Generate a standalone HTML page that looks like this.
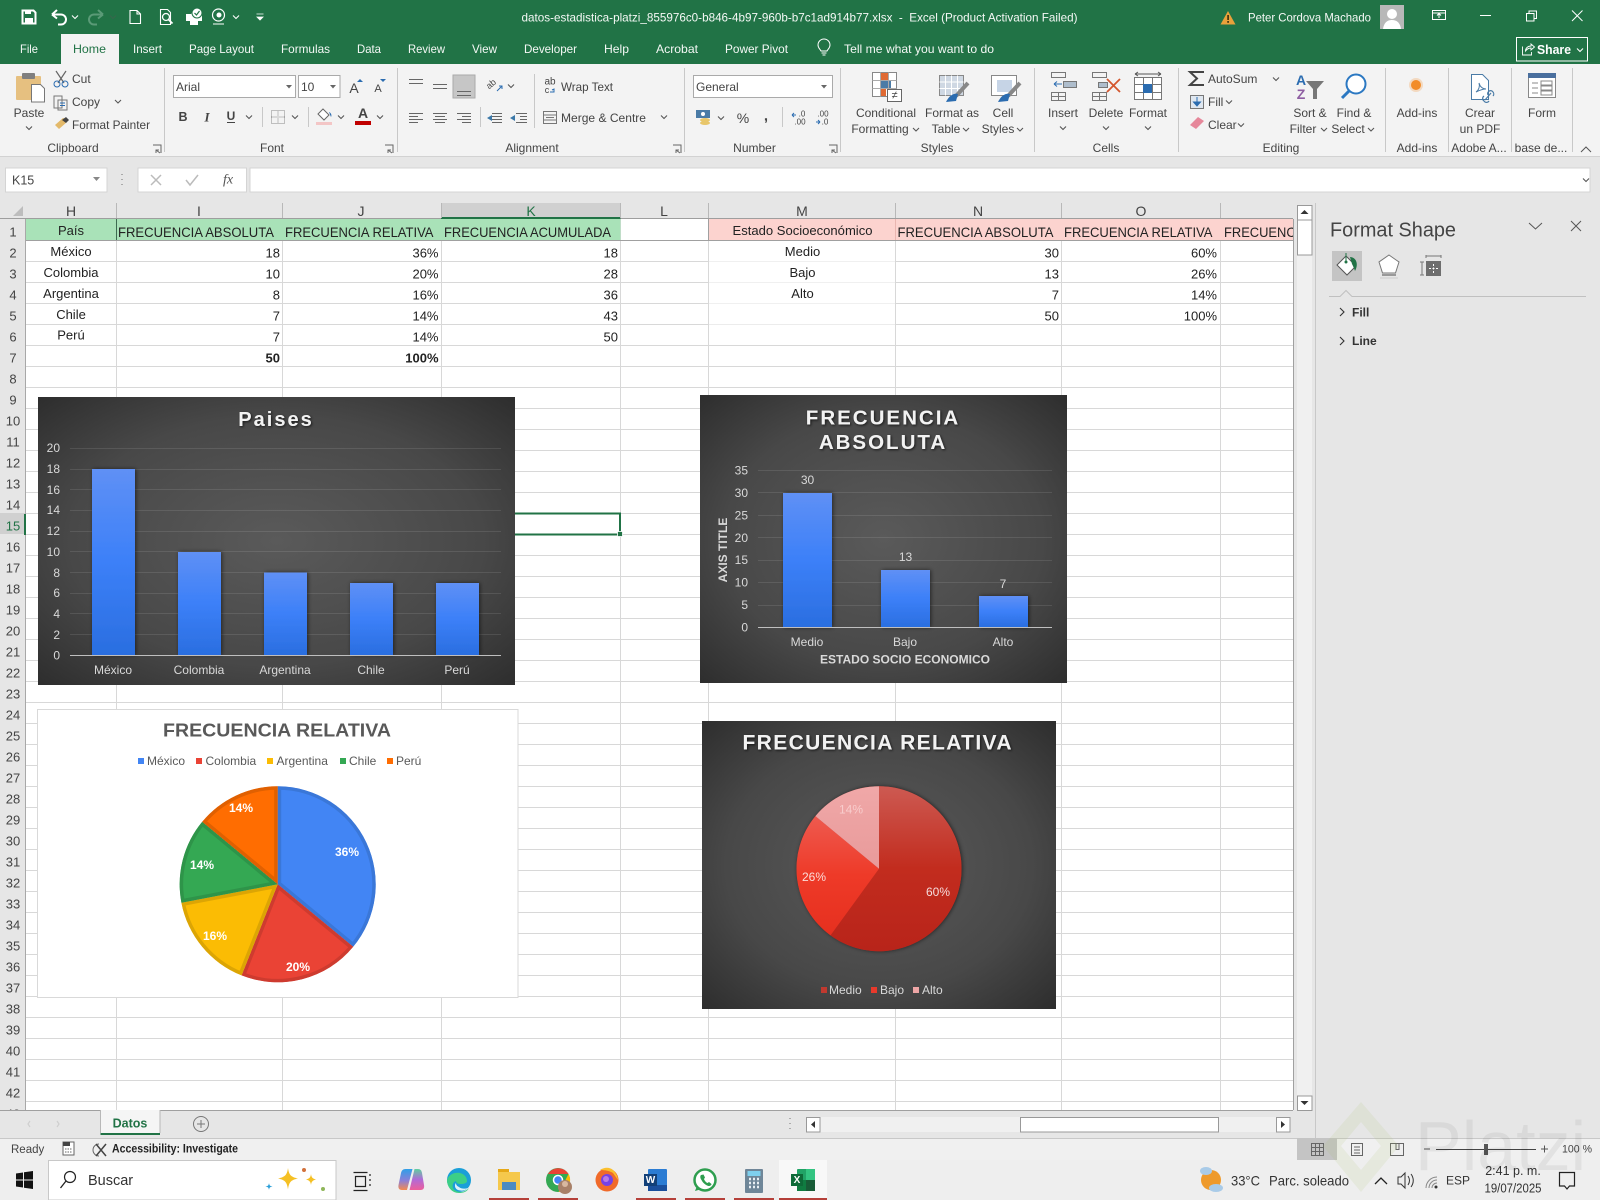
<!DOCTYPE html>
<html lang="en"><head><meta charset="utf-8"><title>Excel</title>
<style>
html,body{margin:0;padding:0;width:1600px;height:1200px;overflow:hidden;background:#fff}
svg{display:block;position:absolute;left:0;top:0}
text{font-family:"Liberation Sans",sans-serif;font-size:12px;fill:#444;dominant-baseline:central;white-space:pre}
.m{text-anchor:middle}.e{text-anchor:end}
.w{fill:#f4f8f5}
.c{font-size:13px;fill:#222}
.h{font-size:14px;fill:#222}
.r{font-size:13px;fill:#444}
.ch{font-size:14px;fill:#444}
.a{font-size:12px;fill:#d9d9d9}
.ti{font-weight:bold;fill:#f2f2f2;letter-spacing:2px;filter:url(#ts)}
.pl{font-weight:bold;fill:#fff;font-size:12px}
.lg{font-size:12px;fill:#595959}
</style></head><body>
<svg width="1600" height="1200" viewBox="0 0 1600 1200" xmlns="http://www.w3.org/2000/svg">
<defs>
<path id="cv" d="M-3-1.5L0 1.5L3-1.5" fill="none" stroke="#555" stroke-width="1.1"/>
<path id="cw" d="M-3-1.5L0 1.5L3-1.5" fill="none" stroke="#fff" stroke-width="1.1"/>
<path id="lc" d="M-4-4H4V4M-1 1L3 4M-1 4V1H2" fill="none" stroke="#666" stroke-width="1"/>
<linearGradient id="bar" x1="0" y1="0" x2="0" y2="1"><stop offset="0" stop-color="#5f90f5"/><stop offset=".5" stop-color="#3c80f8"/><stop offset="1" stop-color="#2a6ee0"/></linearGradient>
<radialGradient id="bg" cx=".5" cy=".5" r=".72"><stop offset="0" stop-color="#5a5a5a"/><stop offset=".6" stop-color="#484848"/><stop offset="1" stop-color="#2c2c2c"/></radialGradient>
<linearGradient id="p1" gradientUnits="userSpaceOnUse" x1="0" y1="786" x2="0" y2="951"><stop offset="0" stop-color="#cd5a52"/><stop offset=".5" stop-color="#c22c1e"/><stop offset="1" stop-color="#b8241a"/></linearGradient>
<linearGradient id="p2" gradientUnits="userSpaceOnUse" x1="0" y1="816" x2="0" y2="935"><stop offset="0" stop-color="#ee5a4f"/><stop offset=".5" stop-color="#ee3a28"/><stop offset="1" stop-color="#e6301f"/></linearGradient>
<linearGradient id="p3" gradientUnits="userSpaceOnUse" x1="0" y1="786" x2="0" y2="869"><stop offset="0" stop-color="#f0a8a8"/><stop offset="1" stop-color="#e89a9a"/></linearGradient>
<linearGradient id="cp1" x1="0" y1="0" x2="0" y2="1"><stop offset="0" stop-color="#2f9fe8"/><stop offset=".55" stop-color="#8a7fd8"/><stop offset="1" stop-color="#f58a4e"/></linearGradient>
<linearGradient id="cp2" x1="0" y1="0" x2="0" y2="1"><stop offset="0" stop-color="#5fcf9f"/><stop offset=".5" stop-color="#b06ad8"/><stop offset="1" stop-color="#ee5f9a"/></linearGradient>
<filter id="ds" x="-30%" y="-10%" width="160%" height="120%"><feDropShadow dx="1" dy="0" stdDeviation="2.2" flood-color="#000" flood-opacity=".55"/></filter>
<filter id="ts" x="-10%" y="-30%" width="120%" height="170%"><feDropShadow dx="1" dy="1" stdDeviation="1.2" flood-color="#000" flood-opacity=".7"/></filter>
<clipPath id="s1"><path d="M277.7 884.3V786.3A98 98 0 0 1 353.2 946.8Z"/></clipPath>
<clipPath id="s2"><path d="M277.7 884.3L353.2 946.8A98 98 0 0 1 241.6 975.4Z"/></clipPath>
<clipPath id="s3"><path d="M277.7 884.3L241.6 975.4A98 98 0 0 1 181.4 902.7Z"/></clipPath>
<clipPath id="s4"><path d="M277.7 884.3L181.4 902.7A98 98 0 0 1 202.2 821.8Z"/></clipPath>
<clipPath id="s5"><path d="M277.7 884.3L202.2 821.8A98 98 0 0 1 277.7 786.3Z"/></clipPath>
<clipPath id="cl1"><rect x="26" y="219" width="1267" height="891"/></clipPath>
</defs>

<!-- Title bar -->
<rect width="1600" height="64" fill="#217346"/>
<rect x="61" y="34" width="58" height="30" fill="#f3f3f3"/>
<!-- QAT -->
<path d="M22.5 10.5h11l2 2v11h-13z" fill="none" stroke="#fff" stroke-width="2"/><rect x="25" y="10" width="6" height="4" fill="#fff"/><rect x="25" y="18" width="8" height="6" fill="#fff"/>
<path d="M52 14.5l5-4.5M52 14.5l5 4M52 14.5h9a5 5 0 0 1 0 10h-3" fill="none" stroke="#fff" stroke-width="2"/>
<use href="#cw" x="75" y="17"/>
<path d="M103 14.5l-5-4.5M103 14.5l-5 4M103 14.500h-9a5 5 0 0 0 0 10h3" fill="none" stroke="#5a9a77" stroke-width="2"/>
<use href="#cv" x="113" y="17" style="opacity:.4"/>
<path d="M130 10.5h7l3.500 3.500v9.500h-10.500z M137 10.500v3.500h3.500" fill="none" stroke="#fff" stroke-width="1.100"/>
<path d="M160.500 9.500h7l3 3v12h-10z" fill="none" stroke="#fff" stroke-width="1.100"/><circle cx="166" cy="17" r="3.500" fill="none" stroke="#fff" stroke-width="1.300"/><path d="M168.500 19.500l4 4" stroke="#fff" stroke-width="1.800"/>
<path d="M186 14h5l2-3h4v3h5v7h-4v4h-8v-4h-4z" fill="#fff"/><circle cx="197" cy="13" r="5" fill="#fff" stroke="#217346"/><path d="M194.500 13l2 2 3-4" fill="none" stroke="#217346" stroke-width="1.200"/>
<circle cx="218.500" cy="15" r="6" fill="none" stroke="#fff" stroke-width="1.200"/><path d="M213 24h11" stroke="#fff" stroke-width="1"/><circle cx="219" cy="15" r="2.500" fill="#fff"/>
<use href="#cw" x="236" y="17"/>
<path d="M256.500 14h7M257 17h6l-3 3z" stroke="#fff" fill="#fff" stroke-width=".8"/>
<text x="521.500" y="17.500" class="w" textLength="556" lengthAdjust="spacingAndGlyphs">datos-estadistica-platzi_855976c0-b846-4b97-960b-b7c1ad914b77.xlsx  -  Excel (Product Activation Failed)</text>
<path d="M1228 11l7.500 13.500h-15z" fill="#e9a13b"/><rect x="1227.200" y="15" width="1.800" height="5" fill="#4a3a10"/><rect x="1227.200" y="21" width="1.800" height="1.800" fill="#4a3a10"/>
<text x="1248" y="17.500" class="w" textLength="123" lengthAdjust="spacingAndGlyphs">Peter Cordova Machado</text>
<rect x="1380" y="5" width="24" height="24" fill="#b8b8b8"/><circle cx="1392" cy="14" r="5" fill="#fff"/><path d="M1383 29c1-7 5-9 9-9s8 2 9 9z" fill="#fff"/>
<path d="M1432.500 10.500h13v9h-13zM1432.500 13h13M1439 18v-4M1437 15.500l2-2 2 2" fill="none" stroke="#fff" stroke-width="1"/>
<path d="M1480 15.500h11" stroke="#fff" stroke-width="1"/>
<path d="M1526.500 13.500h7.500v7.500h-7.500zM1529 13.500v-2.500h7.500v7.500h-2.500" fill="none" stroke="#fff" stroke-width="1"/>
<path d="M1572 10.500l10.500 10.500M1582.500 10.500l-10.500 10.500" stroke="#fff" stroke-width="1"/>
<!-- Tabs -->
<text x="20" y="49" class="w" textLength="18" lengthAdjust="spacingAndGlyphs">File</text>
<text x="73" y="49" style="fill:#217346" textLength="33" lengthAdjust="spacingAndGlyphs">Home</text>
<text x="133" y="49" class="w" textLength="29" lengthAdjust="spacingAndGlyphs">Insert</text>
<text x="189" y="49" class="w" textLength="65" lengthAdjust="spacingAndGlyphs">Page Layout</text>
<text x="281" y="49" class="w" textLength="49" lengthAdjust="spacingAndGlyphs">Formulas</text>
<text x="357" y="49" class="w" textLength="24" lengthAdjust="spacingAndGlyphs">Data</text>
<text x="408" y="49" class="w" textLength="37" lengthAdjust="spacingAndGlyphs">Review</text>
<text x="472" y="49" class="w" textLength="25" lengthAdjust="spacingAndGlyphs">View</text>
<text x="524" y="49" class="w" textLength="53" lengthAdjust="spacingAndGlyphs">Developer</text>
<text x="604" y="49" class="w" textLength="25" lengthAdjust="spacingAndGlyphs">Help</text>
<text x="656" y="49" class="w" textLength="42" lengthAdjust="spacingAndGlyphs">Acrobat</text>
<text x="725" y="49" class="w" textLength="63" lengthAdjust="spacingAndGlyphs">Power Pivot</text>
<path d="M821 52c-1-2-3-3-3-6a6 6 0 0 1 12 0c0 3-2 4-3 6zM821.500 54h5M822.500 56h3" fill="none" stroke="#fff" stroke-width="1" transform="translate(0,-1)"/>
<text x="844" y="49" class="w" textLength="150" lengthAdjust="spacingAndGlyphs">Tell me what you want to do</text>
<rect x="1516.500" y="37.500" width="71" height="23.500" fill="none" stroke="#fff"/>
<path d="M1522.500 46.500v8.500h9v-3M1525.500 51c0-3 2.500-5 5.500-5v-2l3.500 3-3.500 3v-2c-2 0-4 1-5.500 3z" fill="none" stroke="#fff" stroke-width=".9"/>
<text x="1537" y="49.500" style="font-size:13px;font-weight:bold;fill:#fff" textLength="34" lengthAdjust="spacingAndGlyphs">Share</text>
<use href="#cw" x="1580" y="50"/>

<!-- Ribbon -->
<rect y="64" width="1600" height="93" fill="#f3f3f3"/>
<rect y="156" width="1600" height="1" fill="#d2d2d2"/>
<g fill="#c8c8c8">
<rect x="164" y="68" width="1" height="84"/><rect x="397" y="68" width="1" height="84"/><rect x="684" y="68" width="1" height="84"/><rect x="840" y="68" width="1" height="84"/><rect x="1034" y="68" width="1" height="84"/><rect x="1178" y="68" width="1" height="84"/><rect x="1385" y="68" width="1" height="84"/><rect x="1448" y="68" width="1" height="84"/><rect x="1511" y="68" width="1" height="84"/><rect x="1572" y="68" width="1" height="84"/>
</g>
<!-- clipboard -->
<rect x="16" y="76" width="25" height="24" rx="1" fill="#e6c080"/><rect x="22" y="73" width="13" height="6" rx="1" fill="#7f7f7f"/>
<path d="M31.500 84.500h9l4 4v13.500h-13z" fill="#fff" stroke="#777"/>
<text x="29" y="113" class="m">Paste</text><use href="#cv" x="29" y="128"/>
<path d="M56 71l8 12M66 71l-8 12" stroke="#666" stroke-width="1.200"/><circle cx="57" cy="84" r="3" fill="none" stroke="#2b6cb0"/><circle cx="65" cy="84" r="3" fill="none" stroke="#2b6cb0"/>
<text x="72" y="79">Cut</text>
<path d="M54 96h8v12h-8zM58 100h9v10h-9z" fill="#f3f3f3" stroke="#777"/><path d="M60 103h5M60 105.500h5" stroke="#2b6cb0"/>
<text x="72" y="102">Copy</text><use href="#cv" x="118" y="101.500"/>
<path d="M67 119l-4-1-8 7 4 4 8-7z" fill="#e3b96a"/><path d="M62 120l4-3 3 3-3 3z" fill="#444"/>
<text x="72" y="125" textLength="78" lengthAdjust="spacingAndGlyphs">Format Painter</text>
<text x="73" y="148" class="m">Clipboard</text><use href="#lc" x="157" y="149"/>
<!-- font -->
<rect x="173.500" y="75.500" width="122" height="22" fill="#fff" stroke="#aaa"/><text x="176" y="87">Arial</text>
<path d="M286 85h6l-3 3.500z" fill="#666"/>
<rect x="298.500" y="75.500" width="41.500" height="22" fill="#fff" stroke="#aaa"/><text x="301" y="87">10</text>
<path d="M330 85h6l-3 3.500z" fill="#666"/>
<text x="354" y="88" class="m" style="font-size:14px">A</text><path d="M357 82h6l-3-3z" fill="#2b6cb0"/>
<text x="378" y="89" class="m" style="font-size:11px">A</text><path d="M380 79h6l-3 3z" fill="#2b6cb0"/>
<text x="183" y="117" class="m" style="font-weight:bold;font-size:12.500px">B</text>
<text x="207" y="117" class="m" style="font-style:italic;font-family:'Liberation Serif',serif;font-weight:bold;font-size:13px">I</text>
<text x="231" y="116" class="m" style="font-weight:bold">U</text><rect x="227" y="122" width="8" height="1" fill="#444"/>
<use href="#cv" x="249" y="117"/><rect x="262" y="107" width="1" height="20" fill="#c8c8c8"/>
<path d="M271.500 110.500h13v13h-13zM278 110.500v13M271.500 117h13" fill="none" stroke="#888" stroke-dasharray="1 1"/>
<use href="#cv" x="295" y="117"/><rect x="308" y="107" width="1" height="20" fill="#c8c8c8"/>
<path d="M323 109l6 6-5 5-6-6z" fill="#fff" stroke="#666"/><path d="M329 112c2 1 3 3 2 5z" fill="#2b6cb0"/><rect x="316" y="122" width="16" height="3" fill="#f3c6c6"/>
<use href="#cv" x="341" y="117"/>
<text x="363" y="113" class="m" style="font-size:14px;font-weight:bold">A</text><rect x="355" y="121" width="16" height="4" fill="#c00000"/>
<use href="#cv" x="380" y="117"/>
<text x="272" y="148" class="m">Font</text><use href="#lc" x="389" y="149"/>
<!-- alignment -->
<rect x="453" y="75" width="22" height="23" fill="#c6c6c6" stroke="#aaa"/>
<g stroke="#666" fill="none">
<path d="M409 79.500h14M409 83.500h14M433 84.500h14M433 88.500h14M457 91.500h14M457 95.500h14"/>
<path d="M409 113.500h14M409 116.500h9M409 119.500h14M409 122.500h9"/>
<path d="M433 113.500h14M435 116.500h10M433 119.500h14M435 122.500h10"/>
<path d="M457 113.500h14M462 116.500h9M457 119.500h14M462 122.500h9"/>
<path d="M492 113.500h10M492 116.500h10M492 119.500h10M492 122.500h10"/>
<path d="M516 113.500h11M520 116.500h7M520 119.500h7M516 122.500h11"/>
</g>
<path d="M487 118l5-3v6zM510 118l5-3v6z" fill="#3b78a8"/>
<rect x="480" y="107" width="1" height="20" fill="#c8c8c8"/><rect x="534" y="74" width="1" height="54" fill="#c8c8c8"/>
<text x="491" y="84" class="m" transform="rotate(-40 491 84)" style="font-size:9px">ab</text><path d="M497 91l5-5M499 86h3v3" stroke="#2b6cb0" fill="none"/>
<use href="#cv" x="511" y="86"/>
<text x="550" y="82" class="m" style="font-size:10px">ab</text><text x="547" y="90" class="m" style="font-size:9px">c</text><path d="M550 92h4v-3l-2 1" stroke="#2b6cb0" fill="none"/>
<text x="561" y="87" textLength="52" lengthAdjust="spacingAndGlyphs">Wrap Text</text>
<path d="M543.500 111.500h13v12h-13zM543.500 115h13M543.500 120h13M546 117.500h8" fill="none" stroke="#777"/>
<text x="561" y="118" textLength="85" lengthAdjust="spacingAndGlyphs">Merge &amp; Centre</text>
<use href="#cv" x="664" y="117"/>
<text x="532" y="148" class="m">Alignment</text><use href="#lc" x="677" y="149"/>
<!-- number -->
<rect x="693.500" y="75.500" width="139" height="22" fill="#fff" stroke="#aaa"/><text x="696" y="87">General</text>
<path d="M821 85h6l-3 3.500z" fill="#666"/>
<rect x="696" y="110" width="14" height="8" fill="#4a7ba6"/><circle cx="703" cy="114" r="2" fill="#fff"/><ellipse cx="705" cy="120" rx="5" ry="2" fill="#e8c66a"/><ellipse cx="705" cy="123" rx="5" ry="2" fill="#e8c66a"/>
<use href="#cv" x="721" y="118"/>
<text x="743" y="118" class="m" style="font-size:14px">%</text>
<text x="766" y="116" class="m" style="font-size:15px;font-weight:bold">,</text>
<rect x="782" y="107" width="1" height="20" fill="#c8c8c8"/>
<text x="802" y="114" class="m" style="font-size:8px">.0</text><text x="800" y="122" class="m" style="font-size:8px">.00</text><path d="M792 115h4M792 115l2-2M792 115l2 2" stroke="#2b6cb0" fill="none"/>
<text x="823" y="114" class="m" style="font-size:8px">.00</text><text x="825" y="122" class="m" style="font-size:8px">.0</text><path d="M816 122h4M820 122l-2-2M820 122l-2 2" stroke="#2b6cb0" fill="none"/>
<text x="754.500" y="148" class="m">Number</text><use href="#lc" x="833" y="149"/>
<!-- styles -->
<rect x="872.500" y="72.500" width="24" height="24" fill="#fff" stroke="#888"/><rect x="880" y="73" width="8" height="8" fill="#e06a33"/><rect x="880" y="81" width="11" height="7" fill="#4a7ba6"/><rect x="880" y="88" width="6" height="8" fill="#e06a33"/>
<path d="M880.500 72.500v24M888.500 72.500v24M872.500 80.500h24M872.500 88.500h24" stroke="#aaa" fill="none"/>
<rect x="887.500" y="89.500" width="14" height="12" fill="#fff" stroke="#666"/><text x="894.500" y="95.500" class="m" style="font-size:11px">≠</text>
<text x="886" y="113" class="m">Conditional</text><text x="880" y="129" class="m">Formatting</text><use href="#cv" x="916" y="129.500"/>
<rect x="939.500" y="75.500" width="24" height="20" fill="#cfd8e3" stroke="#888"/><path d="M945.500 75.500v20M951.500 75.500v20M957.500 75.500v20M939.500 82h24M939.500 88.500h24" stroke="#fff"/>
<path d="M968 83l-12 13" stroke="#888" stroke-width="4"/><path d="M946 102c3-6 7-9 12-8l-2 7z" fill="#2b6cb0"/>
<text x="952" y="113" class="m">Format as</text><text x="946" y="129" class="m">Table</text><use href="#cv" x="966" y="129.500"/>
<rect x="991.500" y="75.500" width="25" height="20" fill="#fff" stroke="#888"/><rect x="997" y="80" width="15" height="12" fill="#c6d4e6"/>
<path d="M1020 83l-12 13" stroke="#888" stroke-width="4"/><path d="M998 102c3-6 7-9 12-8l-2 7z" fill="#2b6cb0"/>
<text x="1003" y="113" class="m">Cell</text><text x="998" y="129" class="m">Styles</text><use href="#cv" x="1020" y="129.500"/>
<text x="937" y="148" class="m">Styles</text>
<!-- cells -->
<g fill="none" stroke="#777">
<path d="M1051.500 72.500h14v5h-14zM1051.500 92.500h14v8h-14zM1058.500 92.500v8M1051.500 96.500h14"/>
<rect x="1063.500" y="81.500" width="13" height="6" fill="#aebdcc"/>
<path d="M1092.500 72.500h14v5h-14zM1092.500 92.500h14v8h-14zM1099.500 92.500v8M1092.500 96.500h14"/>
<rect x="1098.500" y="82.500" width="9" height="5" fill="#aebdcc"/>
<rect x="1134.500" y="77.500" width="27" height="22" fill="#fff"/>
<path d="M1134.500 84.500h27M1134.500 92.500h27M1143.500 77.500v22M1152.500 77.500v22"/>
</g>
<path d="M1054 84h8M1054 84l3-2.500M1054 84l3 2.500" stroke="#2b6cb0" fill="none"/>
<path d="M1107 79l13 13M1120 79l-13 13" stroke="#d4572f" stroke-width="1.800"/>
<rect x="1143" y="84" width="9" height="9" fill="#2b6cb0"/>
<path d="M1135 74h26M1135 74l3-2M1135 74l3 2M1161 74l-3-2M1161 74l-3 2" stroke="#555" fill="none"/>
<text x="1063" y="113" class="m">Insert</text><use href="#cv" x="1063" y="128"/>
<text x="1106" y="113" class="m">Delete</text><use href="#cv" x="1106" y="128"/>
<text x="1148" y="113" class="m">Format</text><use href="#cv" x="1148" y="128"/>
<text x="1106" y="148" class="m">Cells</text>
<!-- editing -->
<path d="M1204 72h-14l7 6.500-7 6.500h14" fill="none" stroke="#444" stroke-width="2"/>
<text x="1208" y="79">AutoSum</text><use href="#cv" x="1276" y="79"/>
<rect x="1190.500" y="95.500" width="13" height="13" fill="#dfe7f0" stroke="#777"/><path d="M1197 97v8M1193.500 102l3.500 4 3.500-4z" stroke="#2b6cb0" fill="#2b6cb0"/>
<text x="1208" y="102">Fill</text><use href="#cv" x="1229" y="102"/>
<path d="M1190 125l8-8 6 4-8 8z" fill="#e6879a"/>
<text x="1208" y="125">Clear</text><use href="#cv" x="1241" y="125"/>
<text x="1301" y="80" class="m" style="font-size:14px;font-weight:bold;fill:#2b6cb0">A</text><text x="1301" y="94" class="m" style="font-size:14px;font-weight:bold;fill:#8e5ea2">Z</text>
<path d="M1306 81h18l-7 8v10h-4v-10z" fill="#777"/>
<circle cx="1356" cy="84" r="9.500" fill="#fff" stroke="#2b78c2" stroke-width="2"/><path d="M1349 91l-7 7" stroke="#2b78c2" stroke-width="3"/>
<text x="1310" y="113" class="m">Sort &amp;</text><text x="1303" y="129" class="m">Filter</text><use href="#cv" x="1324" y="129.500"/>
<text x="1354" y="113" class="m">Find &amp;</text><text x="1348" y="129" class="m">Select</text><use href="#cv" x="1371" y="129.500"/>
<text x="1281" y="148" class="m">Editing</text>
<!-- add-ins -->
<circle cx="1416" cy="85" r="5" fill="#f28c28"/><circle cx="1416" cy="85" r="7" fill="#f28c28" opacity=".25"/>
<text x="1417" y="113" class="m">Add-ins</text><text x="1417" y="148" class="m">Add-ins</text>
<path d="M1471.500 74.500h11l6 6v19h-17z" fill="#fff" stroke="#4a7ba6"/><path d="M1476 92c3-2 4-6 3-9 1 4 4 6 7 6-3 0-6 1-10 3z" fill="none" stroke="#4a7ba6"/>
<path d="M1485 100l6-7M1488 95a3 3 0 0 1 4-4l1 1a3 3 0 0 1 0 4M1484 96a3 3 0 0 0 0 5l1 1a3 3 0 0 0 4-1" fill="none" stroke="#4a7ba6" stroke-width="1.200"/>
<text x="1480" y="113" class="m">Crear</text><text x="1480" y="129" class="m">un PDF</text><text x="1479" y="148" class="m">Adobe A...</text>
<rect x="1528.500" y="73.500" width="27" height="24" fill="#fff" stroke="#888"/><rect x="1528" y="73" width="28" height="5" fill="#4a6f9e"/>
<path d="M1532 83h6M1532 88h6M1532 93h6M1541 81h11v4h-11zM1541 86h11v4h-11zM1541 91h11v4h-11z" stroke="#888" fill="none"/>
<text x="1542" y="113" class="m">Form</text><text x="1541" y="148" class="m">base de...</text>
<path d="M1581 152l5-5 5 5" fill="none" stroke="#555"/>

<!-- Formula bar -->
<rect y="157" width="1600" height="62" fill="#e6e6e6"/>
<rect x="5.500" y="168" width="101.500" height="24" fill="#fff" stroke="#d4d4d4"/><text x="12" y="180.500" style="font-size:12.500px">K15</text>
<path d="M93 177h7l-3.500 4z" fill="#888"/>
<path d="M122 174v1M122 179v1M122 184v1" stroke="#aaa" stroke-width="2"/>
<rect x="138" y="168" width="108.500" height="24" fill="#fff" stroke="#d4d4d4"/>
<path d="M151 175l10 10M161 175l-10 10" stroke="#bbb" stroke-width="1.500"/>
<path d="M186 180l4 5 8-10" fill="none" stroke="#bbb" stroke-width="1.500"/>
<text x="228" y="180" class="m" style="font-family:'Liberation Serif',serif;font-style:italic;font-size:14px;fill:#555">fx</text>
<rect x="250" y="168" width="1340" height="24" fill="#fff" stroke="#d4d4d4"/>
<use href="#cv" x="1586" y="180"/>

<!-- Sheet -->
<rect x="26" y="219" width="1267" height="891" fill="#fff"/>
<g fill="#d8d8d8">
<rect x="26" y="240" width="1267" height="1"/><rect x="26" y="261" width="1267" height="1"/><rect x="26" y="282" width="1267" height="1"/><rect x="26" y="303" width="1267" height="1"/><rect x="26" y="324" width="1267" height="1"/><rect x="26" y="345" width="1267" height="1"/><rect x="26" y="366" width="1267" height="1"/><rect x="26" y="387" width="1267" height="1"/><rect x="26" y="408" width="1267" height="1"/><rect x="26" y="429" width="1267" height="1"/><rect x="26" y="450" width="1267" height="1"/><rect x="26" y="471" width="1267" height="1"/><rect x="26" y="492" width="1267" height="1"/><rect x="26" y="513" width="1267" height="1"/><rect x="26" y="534" width="1267" height="1"/><rect x="26" y="555" width="1267" height="1"/><rect x="26" y="576" width="1267" height="1"/><rect x="26" y="597" width="1267" height="1"/><rect x="26" y="618" width="1267" height="1"/><rect x="26" y="639" width="1267" height="1"/><rect x="26" y="660" width="1267" height="1"/><rect x="26" y="681" width="1267" height="1"/><rect x="26" y="702" width="1267" height="1"/><rect x="26" y="723" width="1267" height="1"/><rect x="26" y="744" width="1267" height="1"/><rect x="26" y="765" width="1267" height="1"/><rect x="26" y="786" width="1267" height="1"/><rect x="26" y="807" width="1267" height="1"/><rect x="26" y="828" width="1267" height="1"/><rect x="26" y="849" width="1267" height="1"/><rect x="26" y="870" width="1267" height="1"/><rect x="26" y="891" width="1267" height="1"/><rect x="26" y="912" width="1267" height="1"/><rect x="26" y="933" width="1267" height="1"/><rect x="26" y="954" width="1267" height="1"/><rect x="26" y="975" width="1267" height="1"/><rect x="26" y="996" width="1267" height="1"/><rect x="26" y="1017" width="1267" height="1"/><rect x="26" y="1038" width="1267" height="1"/><rect x="26" y="1059" width="1267" height="1"/><rect x="26" y="1080" width="1267" height="1"/><rect x="26" y="1101" width="1267" height="1"/>
<rect x="116" y="219" width="1" height="891"/><rect x="282" y="219" width="1" height="891"/><rect x="441" y="219" width="1" height="891"/><rect x="620" y="219" width="1" height="891"/><rect x="708" y="219" width="1" height="891"/><rect x="895" y="219" width="1" height="891"/><rect x="1061" y="219" width="1" height="891"/><rect x="1220" y="219" width="1" height="891"/>
</g>
<rect x="709" y="241" width="186" height="84" fill="#fff"/><rect x="709" y="261" width="186" height="1" fill="#f0f0f0"/><rect x="709" y="282" width="186" height="1" fill="#f0f0f0"/><rect x="709" y="303" width="186" height="1" fill="#f0f0f0"/><rect x="709" y="324" width="186" height="1" fill="#ececec"/>
<!-- header fills -->
<rect x="26" y="219" width="594.500" height="21" fill="#a9e2b8"/>
<rect x="708" y="219" width="585" height="21" fill="#fcd3cf"/>
<rect x="26" y="240" width="1267" height="1" fill="#a0a0a0"/>
<rect x="116" y="219" width="1" height="21" fill="#3d6b50"/>
<rect x="708" y="219" width="1" height="22" fill="#a0a0a0"/><rect x="895" y="219" width="1" height="21" fill="#e9b5b0"/>
<!-- cells -->
<g clip-path="url(#cl1)">
<text x="71" y="230.700" class="c m">País</text>
<text x="118" y="232" class="h" textLength="156" lengthAdjust="spacingAndGlyphs">FRECUENCIA ABSOLUTA</text>
<text x="285" y="232" class="h" textLength="148.500" lengthAdjust="spacingAndGlyphs">FRECUENCIA RELATIVA</text>
<text x="444" y="232" class="h" textLength="167" lengthAdjust="spacingAndGlyphs">FRECUENCIA ACUMULADA</text>
<text x="802.500" y="230.500" class="c m" textLength="140" lengthAdjust="spacingAndGlyphs">Estado Socioeconómico</text>
<text x="897.500" y="232" class="h" textLength="156" lengthAdjust="spacingAndGlyphs">FRECUENCIA ABSOLUTA</text>
<text x="1064" y="232" class="h" textLength="148.500" lengthAdjust="spacingAndGlyphs">FRECUENCIA RELATIVA</text>
<text x="1224" y="232" class="h" textLength="167" lengthAdjust="spacingAndGlyphs">FRECUENCIA ACUMULADA</text>
<text x="71" y="251.700" class="c m">México</text><text x="71" y="272.700" class="c m">Colombia</text><text x="71" y="293.500" class="c m">Argentina</text><text x="71" y="314.500" class="c m">Chile</text><text x="71" y="335" class="c m">Perú</text>
<text x="280" y="253" class="c e">18</text><text x="280" y="274" class="c e">10</text><text x="280" y="295" class="c e">8</text><text x="280" y="316" class="c e">7</text><text x="280" y="337" class="c e">7</text><text x="280" y="358" class="c e" style="font-weight:bold">50</text>
<text x="438.500" y="253" class="c e">36%</text><text x="438.500" y="274" class="c e">20%</text><text x="438.500" y="295" class="c e">16%</text><text x="438.500" y="316" class="c e">14%</text><text x="438.500" y="337" class="c e">14%</text><text x="438.500" y="358" class="c e" style="font-weight:bold">100%</text>
<text x="618" y="253" class="c e">18</text><text x="618" y="274" class="c e">28</text><text x="618" y="295" class="c e">36</text><text x="618" y="316" class="c e">43</text><text x="618" y="337" class="c e">50</text>
<text x="802.500" y="251.700" class="c m">Medio</text><text x="802.500" y="272.500" class="c m">Bajo</text><text x="802.500" y="293.500" class="c m">Alto</text>
<text x="1059" y="253" class="c e">30</text><text x="1059" y="274" class="c e">13</text><text x="1059" y="295" class="c e">7</text><text x="1059" y="316" class="c e">50</text>
<text x="1217" y="253" class="c e">60%</text><text x="1217" y="274" class="c e">26%</text><text x="1217" y="295" class="c e">14%</text><text x="1217" y="316" class="c e">100%</text>
</g>
<!-- selection -->
<rect x="441" y="513.500" width="179" height="21" fill="none" stroke="#217346" stroke-width="2"/>
<rect x="617.500" y="531.500" width="5" height="5" fill="#217346" stroke="#fff" stroke-width=".8"/>

<!-- column headers -->
<rect y="203" width="1293" height="16" fill="#e6e6e6"/>
<rect x="441" y="203" width="179.500" height="16" fill="#d0d0d0"/>
<rect y="218" width="1293" height="1" fill="#9e9e9e"/>
<rect x="441" y="217" width="179.500" height="2" fill="#217346"/>
<g fill="#b8b8b8"><rect x="116" y="203" width="1" height="15"/><rect x="282" y="203" width="1" height="15"/><rect x="441" y="203" width="1" height="15"/><rect x="620" y="203" width="1" height="15"/><rect x="708" y="203" width="1" height="15"/><rect x="895" y="203" width="1" height="15"/><rect x="1061" y="203" width="1" height="15"/><rect x="1220" y="203" width="1" height="15"/></g>
<path d="M23 206v10h-10z" fill="#bdbdbd"/>
<text x="71" y="211" class="ch m">H</text><text x="199" y="211" class="ch m">I</text><text x="361" y="211" class="ch m">J</text><text x="531" y="211" class="ch m" style="fill:#217346">K</text><text x="664" y="211" class="ch m">L</text><text x="802" y="211" class="ch m">M</text><text x="978" y="211" class="ch m">N</text><text x="1141" y="211" class="ch m">O</text>
<!-- row headers -->
<rect y="219" width="25" height="891" fill="#e6e6e6"/>
<rect y="513" width="25" height="21" fill="#d0d0d0"/>
<rect x="25" y="219" width="1" height="891" fill="#a8a8a8"/>
<rect x="24" y="514" width="2" height="21" fill="#217346"/>
<g>
<text x="13" y="232" class="r m">1</text><text x="13" y="253" class="r m">2</text><text x="13" y="274" class="r m">3</text><text x="13" y="295" class="r m">4</text><text x="13" y="316" class="r m">5</text><text x="13" y="337" class="r m">6</text><text x="13" y="358" class="r m">7</text><text x="13" y="379" class="r m">8</text><text x="13" y="400" class="r m">9</text><text x="13" y="421" class="r m">10</text><text x="13" y="442" class="r m">11</text><text x="13" y="463" class="r m">12</text><text x="13" y="484" class="r m">13</text><text x="13" y="505" class="r m">14</text><text x="13" y="526" class="r m" style="fill:#217346">15</text><text x="13" y="547" class="r m">16</text><text x="13" y="568" class="r m">17</text><text x="13" y="589" class="r m">18</text><text x="13" y="610" class="r m">19</text><text x="13" y="631" class="r m">20</text><text x="13" y="652" class="r m">21</text><text x="13" y="673" class="r m">22</text><text x="13" y="694" class="r m">23</text><text x="13" y="715" class="r m">24</text><text x="13" y="736" class="r m">25</text><text x="13" y="757" class="r m">26</text><text x="13" y="778" class="r m">27</text><text x="13" y="799" class="r m">28</text><text x="13" y="820" class="r m">29</text><text x="13" y="841" class="r m">30</text><text x="13" y="862" class="r m">31</text><text x="13" y="883" class="r m">32</text><text x="13" y="904" class="r m">33</text><text x="13" y="925" class="r m">34</text><text x="13" y="946" class="r m">35</text><text x="13" y="967" class="r m">36</text><text x="13" y="988" class="r m">37</text><text x="13" y="1009" class="r m">38</text><text x="13" y="1030" class="r m">39</text><text x="13" y="1051" class="r m">40</text><text x="13" y="1072" class="r m">41</text><text x="13" y="1093" class="r m">42</text><text x="13" y="1114" class="r m">43</text>
</g>

<!-- Chart 1 -->
<rect x="38" y="397" width="477" height="288" fill="url(#bg)"/>
<g stroke="#fff" stroke-opacity=".1"><path d="M70 448.500H501M70 469.500H501M70 489.500H501M70 510.500H501M70 531.500H501M70 551.500H501M70 572.500H501M70 593.500H501M70 613.500H501M70 634.500H501"/></g>
<g fill="url(#bar)" filter="url(#ds)"><rect x="92" y="469" width="43" height="186"/><rect x="178" y="552" width="43" height="103"/><rect x="264" y="572.500" width="43" height="82.500"/><rect x="350" y="583" width="43" height="72"/><rect x="436" y="583" width="43" height="72"/></g>
<rect x="70" y="655" width="431" height="1" fill="#bfbfbf"/>
<text x="276" y="420" class="m ti" style="font-size:20px">Paises</text>
<text x="60" y="448" class="a e">20</text><text x="60" y="469" class="a e">18</text><text x="60" y="490" class="a e">16</text><text x="60" y="510" class="a e">14</text><text x="60" y="531" class="a e">12</text><text x="60" y="552" class="a e">10</text><text x="60" y="573" class="a e">8</text><text x="60" y="593" class="a e">6</text><text x="60" y="614" class="a e">4</text><text x="60" y="635" class="a e">2</text><text x="60" y="655.500" class="a e">0</text>
<text x="113" y="670" class="a m">México</text><text x="199" y="670" class="a m">Colombia</text><text x="285" y="670" class="a m">Argentina</text><text x="371" y="670" class="a m">Chile</text><text x="457" y="670" class="a m">Perú</text>

<!-- Chart 2 -->
<rect x="700" y="395" width="367" height="288" fill="url(#bg)"/>
<g stroke="#fff" stroke-opacity=".1"><path d="M758 470.500H1052M758 492.500H1052M758 515.500H1052M758 537.500H1052M758 560.500H1052M758 582.500H1052M758 605.500H1052"/></g>
<g fill="url(#bar)" filter="url(#ds)"><rect x="783" y="493" width="49" height="134.500"/><rect x="881" y="570" width="49" height="57.500"/><rect x="979" y="596" width="49" height="31.500"/></g>
<rect x="758" y="627" width="294" height="1" fill="#bfbfbf"/>
<text x="883" y="418" class="m ti" style="font-size:20.500px">FRECUENCIA</text><text x="883" y="442.500" class="m ti" style="font-size:20.500px">ABSOLUTA</text>
<text x="748" y="470.500" class="a e">35</text><text x="748" y="493" class="a e">30</text><text x="748" y="515.500" class="a e">25</text><text x="748" y="538" class="a e">20</text><text x="748" y="560" class="a e">15</text><text x="748" y="582.500" class="a e">10</text><text x="748" y="605" class="a e">5</text><text x="748" y="627.500" class="a e">0</text>
<text x="807.500" y="480" class="a m">30</text><text x="905.500" y="557" class="a m">13</text><text x="1003" y="584" class="a m">7</text>
<text x="807" y="642" class="a m">Medio</text><text x="905" y="642" class="a m">Bajo</text><text x="1003" y="642" class="a m">Alto</text>
<text x="905" y="659.500" class="a m" style="font-weight:bold" textLength="170" lengthAdjust="spacingAndGlyphs">ESTADO SOCIO ECONOMICO</text>
<text x="723" y="550" class="a m" style="font-weight:bold" transform="rotate(-90 723 550)">AXIS TITLE</text>

<!-- Chart 3 -->
<rect x="37.500" y="709.500" width="480.500" height="288" fill="#fff" stroke="#d9d9d9"/>
<text x="277" y="730" class="m" style="font-size:18.500px;font-weight:bold;fill:#595959" textLength="228" lengthAdjust="spacingAndGlyphs">FRECUENCIA RELATIVA</text>
<rect x="138" y="758" width="6" height="6" fill="#4285f4"/><text x="147" y="761" class="lg">México</text>
<rect x="196" y="758" width="6" height="6" fill="#ea4335"/><text x="205.500" y="761" class="lg">Colombia</text>
<rect x="267" y="758" width="6" height="6" fill="#fbbc04"/><text x="276.500" y="761" class="lg">Argentina</text>
<rect x="340" y="758" width="6" height="6" fill="#34a853"/><text x="349" y="761" class="lg">Chile</text>
<rect x="387" y="758" width="6" height="6" fill="#ff6d01"/><text x="396" y="761" class="lg">Perú</text>
<path d="M277.700 884.300V786.300A98 98 0 0 1 353.200 946.800Z" fill="#4285f4" stroke="#3a77d8" stroke-width="7" clip-path="url(#s1)"/>
<path d="M277.700 884.300L353.200 946.800A98 98 0 0 1 241.600 975.400Z" fill="#ea4335" stroke="#ce3b2f" stroke-width="7" clip-path="url(#s2)"/>
<path d="M277.700 884.300L241.600 975.400A98 98 0 0 1 181.400 902.700Z" fill="#fbbc04" stroke="#dca504" stroke-width="7" clip-path="url(#s3)"/>
<path d="M277.700 884.300L181.400 902.700A98 98 0 0 1 202.200 821.800Z" fill="#34a853" stroke="#2e9449" stroke-width="7" clip-path="url(#s4)"/>
<path d="M277.700 884.300L202.200 821.800A98 98 0 0 1 277.700 786.300Z" fill="#ff6d01" stroke="#e06001" stroke-width="7" clip-path="url(#s5)"/>
<text x="347" y="852" class="pl m">36%</text><text x="298" y="967" class="pl m">20%</text><text x="215" y="936" class="pl m">16%</text><text x="202" y="865" class="pl m">14%</text><text x="241" y="808" class="pl m">14%</text>

<!-- Chart 4 -->
<rect x="702" y="721" width="354" height="288" fill="url(#bg)"/>
<text x="878" y="743" class="m ti" style="font-size:21px" textLength="271">FRECUENCIA RELATIVA</text>
<g filter="url(#ds)"><circle cx="879" cy="868.700" r="82.500" fill="#b8241a"/></g>
<path d="M879 868.700V786.200A82.500 82.500 0 1 1 830.500 935.400Z" fill="url(#p1)"/>
<path d="M879 868.700L830.500 935.400A82.500 82.500 0 0 1 815.400 816.100Z" fill="url(#p2)"/>
<path d="M879 868.700L815.400 816.100A82.500 82.500 0 0 1 879 786.200Z" fill="url(#p3)"/>
<text x="938" y="892" class="a m" style="fill:#f5dcdc">60%</text><text x="814" y="877" class="a m" style="fill:#fbdcd8">26%</text><text x="851" y="809.500" class="a m" style="fill:#f8cccc">14%</text>
<rect x="821" y="987" width="6" height="6" fill="#c0392f"/><text x="829" y="990" class="a">Medio</text>
<rect x="871" y="987" width="6" height="6" fill="#e8392b"/><text x="880" y="990" class="a">Bajo</text>
<rect x="913" y="987" width="6" height="6" fill="#eea6a6"/><text x="922" y="990" class="a">Alto</text>

<!-- sheet tabs bar -->
<rect y="1110" width="1315" height="28" fill="#e6e6e6"/>
<rect y="1110" width="1293" height="1" fill="#a0a0a0"/>
<rect x="100.500" y="1110" width="59.500" height="25" fill="#f5f5f5"/>
<rect x="100.500" y="1133" width="59.500" height="2" fill="#217346"/>
<path d="M100.500 1110v23M160 1110v23" stroke="#b8b8b8"/>
<text x="130" y="1123.500" class="m" style="font-weight:bold;fill:#217346;font-size:12.500px">Datos</text>
<path d="M30 1121l-2 3 2 3M57 1121l2 3-2 3" fill="none" stroke="#cfcfcf" stroke-width="1.200"/>
<circle cx="201" cy="1124" r="7.500" fill="none" stroke="#777"/><path d="M201 1120v8M197 1124h8" stroke="#777"/>
<path d="M790 1118v1M790 1123v1M790 1128v1" stroke="#999" stroke-width="1.500"/>
<rect x="820" y="1117" width="456" height="15" fill="#f0f0f0"/>
<rect x="806.500" y="1117.500" width="13.500" height="14.500" fill="#fff" stroke="#999"/><path d="M815 1121v7l-4-3.500z" fill="#333"/>
<rect x="1020.500" y="1117.500" width="198" height="14.500" fill="#fff" stroke="#999"/>
<rect x="1276.500" y="1117.500" width="13.500" height="14.500" fill="#fff" stroke="#999"/><path d="M1281 1121v7l4-3.500z" fill="#333"/>
<!-- vertical scroll -->
<rect x="1293" y="203" width="22" height="907" fill="#e6e6e6"/>
<rect x="1293" y="219" width="1" height="891" fill="#a0a0a0"/>
<rect x="1297" y="205" width="15" height="905" fill="#f0f0f0"/>
<rect x="1297.500" y="205.500" width="14.500" height="14.500" fill="#fff" stroke="#999"/><path d="M1300.500 214h8l-4-4z" fill="#333"/>
<rect x="1297.500" y="220" width="14.500" height="35" fill="#fff" stroke="#999"/>
<rect x="1297.500" y="1096" width="14.500" height="14.500" fill="#fff" stroke="#999"/><path d="M1300.500 1101h8l-4 4z" fill="#333"/>

<!-- Format Shape pane -->
<rect x="1315" y="203" width="285" height="935" fill="#e6e6e6"/>
<rect x="1315" y="203" width="1" height="935" fill="#c8c8c8"/>
<text x="1330" y="230" style="font-size:20.500px;fill:#444" textLength="126" lengthAdjust="spacingAndGlyphs">Format Shape</text>
<path d="M1529 223l6.500 6 6.500-6" fill="none" stroke="#555"/>
<path d="M1571 221l10 10M1581 221l-10 10" stroke="#555"/>
<rect x="1332" y="251" width="30" height="30" fill="#c4c4c4"/>
<path d="M1346 256l10 10-9 9-10-10z" fill="#fff" stroke="#555"/><path d="M1346 253v9" stroke="#217346"/><circle cx="1346" cy="262" r="1.500" fill="#217346"/>
<path d="M1350 257c6 0 9 7 5 14-1-3-2-5-3-7z" fill="#217346"/>
<path d="M1389 255l10 7-3.500 11h-13l-3.500-11z" fill="#fff" stroke="#777"/><path d="M1382 275h14" stroke="#999" stroke-width="2"/><path d="M1380 278h18" stroke="#ccc"/>
<rect x="1426" y="261" width="15" height="15" fill="#6e6e6e"/>
<path d="M1433.500 264v9M1429 268.500h9" stroke="#fff" stroke-dasharray="2 1.500"/>
<path d="M1426 256h15M1426 255v3M1441 255v3M1420 262h4M1420 275h4M1422 262v13" stroke="#777" fill="none"/>
<path d="M1329 296.500H1340L1346 290.500L1352 296.500H1586" fill="none" stroke="#c0c0c0"/>
<path d="M1340 308l4 4-4 4M1340 337l4 4-4 4" fill="none" stroke="#333" stroke-width="1.100"/>
<text x="1352" y="312.500" style="font-weight:bold;fill:#333">Fill</text><text x="1352" y="341" style="font-weight:bold;fill:#333">Line</text>

<!-- Status bar -->
<rect y="1138" width="1600" height="22" fill="#f0f0f0"/>
<rect y="1138" width="1600" height="1" fill="#c8c8c8"/>
<text x="11" y="1150" style="font-size:11.500px">Ready</text>
<rect x="63" y="1142" width="11" height="13" fill="#fff" stroke="#666"/><rect x="63" y="1142" width="7" height="4" fill="#444"/><path d="M65 1149h7M65 1152h7" stroke="#666" stroke-dasharray="1.500 1"/>
<path d="M99 1144a6 6 0 1 0 0 12" fill="none" stroke="#666"/><path d="M96 1144l10 12M106 1144l-10 12" stroke="#444" stroke-width="1.500"/>
<text x="112" y="1149.500" style="font-size:11.500px;fill:#222;font-weight:bold" textLength="126" lengthAdjust="spacingAndGlyphs">Accessibility: Investigate</text>
<rect x="1297" y="1138" width="40" height="22" fill="#c4c4c4"/>
<path d="M1311.500 1143.500h12v12h-12zM1315.500 1143.500v12M1319.500 1143.500v12M1311.500 1147.500h12M1311.500 1151.500h12" fill="none" stroke="#666"/>
<path d="M1351.500 1143.500h11v12h-11zM1354 1147h6M1354 1150h6M1354 1153h6" fill="none" stroke="#666"/>
<path d="M1390.500 1143.500h13v12h-13zM1396 1143.500v6h3v-6" fill="none" stroke="#666"/>
<path d="M1424 1149h6M1541 1149h7M1544.500 1145.500v7" stroke="#555" fill="none"/>
<rect x="1436" y="1149" width="100" height="1" fill="#444"/><rect x="1484" y="1144" width="4" height="11" fill="#555"/>
<text x="1562" y="1149.500" style="font-size:11px;fill:#444" textLength="30" lengthAdjust="spacingAndGlyphs">100 %</text>

<!-- Taskbar -->
<rect y="1160" width="1600" height="40" fill="#eeeeee"/>
<g fill="#111"><path d="M16 1173.500l7-1v7h-7zM24 1172.300l9-1.300v8.500h-9zM16 1180.500h7v7l-7-1zM24 1180.500h9v8.500l-9-1.300z"/></g>
<rect x="48.500" y="1160.500" width="287.500" height="39.500" fill="#fff" stroke="#c8c8c8"/>
<circle cx="70" cy="1177" r="5.500" fill="none" stroke="#222" stroke-width="1.200"/><path d="M66 1181l-5.500 7" stroke="#222" stroke-width="1.300"/>
<text x="88" y="1181" style="font-size:14.500px;fill:#333">Buscar</text>
<path d="M288 1168c1 7 3 9 10 10.500-7 1.500-9 3.500-10 11-1-7.500-3-9.500-10-11 7-1.500 9-3.500 10-10.500z" fill="#f5c024"/>
<path d="M311 1174c.5 3.500 1.500 4.500 5 5.500-3.500 1-4.500 2-5 5.500-.5-3.500-1.500-4.500-5-5.500 3.500-1 4.500-2 5-5.500z" fill="#f5c024"/>
<path d="M269 1183c.4 2.500 1 3 3.500 3.500-2.500.5-3.100 1-3.500 3.500-.4-2.500-1-3-3.500-3.500 2.500-.5 3.100-1 3.500-3.500z" fill="#2b9fd9"/>
<circle cx="304" cy="1170" r="2" fill="#d2713c"/><circle cx="323" cy="1189" r="2" fill="#8fb65a"/>
<path d="M353.500 1172.500h14M353.500 1190.500h14M355.500 1176.500h10v10h-10zM370 1174v2M370 1179v2M370 1184v2" fill="none" stroke="#222" stroke-width="1.200"/>
<!-- copilot -->
<path d="M405 1169h7.500l-5.500 21h-5c-3 0-4-2-3.500-5l2.500-12c.5-2.500 2-4 4.500-4z" fill="url(#cp1)"/>
<path d="M414.500 1169h3.500c2.500 0 3.500 1.500 4 4l2 12c.5 3-.5 5-3.500 5h-11z" fill="url(#cp2)"/>
<!-- edge -->
<circle cx="459" cy="1180" r="12" fill="#1a9fd8"/><path d="M447 1180c2-6 8-8 13-7 4 1 7 4 7 8 0 2-3 3-6 3-3 0-5-1-5-3-3 1-4 4-3 7 1 2 4 4 8 4 3 0 6-2 8-4-2 4-6 5-10 5-7 0-12-6-12-13z" fill="#3ccf87"/><path d="M456 1183c-2 2-1 6 2 7 3 1 7 1 10-2-3 1-7 1-9-1-2-1-3-2-3-4z" fill="#fff" opacity=".85"/>
<!-- folder -->
<rect x="498" y="1169" width="11" height="5" fill="#e6a817"/><rect x="498" y="1172" width="22" height="18" fill="#f5c84c"/><rect x="502" y="1182" width="14" height="8" fill="#4a8bc2"/>
<!-- chrome -->
<circle cx="558" cy="1180" r="12" fill="#34a853"/><path d="M548 1174a12 12 0 0 1 20.500 0H558z" fill="#ea4335"/><path d="M568.500 1174a12 12 0 0 1-10 18l5-8z" fill="#fbbc04"/><circle cx="558" cy="1180" r="4.500" fill="#4285f4" stroke="#fff" stroke-width="1.500"/>
<circle cx="565" cy="1187" r="7" fill="#a88068"/><circle cx="565" cy="1184" r="3" fill="#d8b8a0"/>
<!-- firefox -->
<circle cx="607" cy="1180" r="11.500" fill="#f06a2a"/><path d="M600 1170c4-3 10-3 13 0 3 3 5 7 5 10l-5-7c-3-2-8-3-13-3z" fill="#fbbf2d"/><circle cx="607" cy="1180" r="6" fill="#7542e5"/><circle cx="606" cy="1179" r="3" fill="#b77ae6"/>
<!-- word -->
<rect x="648" y="1169" width="19" height="22" rx="1" fill="#2b7cd3"/><rect x="648" y="1185" width="19" height="6" fill="#1a4f9c"/><rect x="644" y="1174" width="13" height="12" fill="#124078"/><text x="650.500" y="1180.500" class="m" style="font-weight:bold;fill:#fff;font-size:10px">W</text>
<!-- whatsapp -->
<circle cx="705" cy="1180" r="10.500" fill="#fff" stroke="#2e9e4f" stroke-width="2.500"/><path d="M697 1186l-2 5 5-1.500z" fill="#2e9e4f"/><path d="M701 1175c-1 1-1 3 .5 5 1.500 3 4 5 7 6 2 0 3-1 3-2l-2.500-2-1.500 1c-1.500-.5-3-2.500-3.500-4l1-1.500-1.500-3z" fill="#2e9e4f"/>
<!-- calc -->
<rect x="745" y="1169" width="18" height="24" rx="1" fill="#6f8698"/><rect x="747.500" y="1171" width="13" height="5" fill="#7fd0ee"/>
<path d="M749 1179h2M753 1179h2M757 1179h2M749 1183h2M753 1183h2M757 1183h2M749 1187h2M753 1187h2M757 1187h2" stroke="#e8eef3" stroke-width="2.500"/>
<!-- excel -->
<rect x="779" y="1160" width="48" height="40" fill="#f8f8f8"/>
<rect x="797" y="1169" width="18" height="22" rx="1" fill="#21a366"/><rect x="806" y="1169" width="9" height="11" fill="#33c481"/><rect x="797" y="1180" width="9" height="11" fill="#107c41"/><rect x="806" y="1180" width="9" height="11" fill="#185c37"/>
<rect x="791" y="1174" width="12" height="12" fill="#0e6a38"/><text x="797" y="1180.500" class="m" style="font-weight:bold;fill:#fff;font-size:10px">X</text>
<g fill="#b5403a"><rect x="489" y="1198" width="40" height="2"/><rect x="538" y="1198" width="40" height="2"/><rect x="636" y="1198" width="40" height="2"/><rect x="685" y="1198" width="40" height="2"/><rect x="734" y="1198" width="40" height="2"/><rect x="779" y="1198" width="48" height="2"/></g>
<!-- tray -->
<circle cx="1211" cy="1180" r="10" fill="#ee9a2b"/><ellipse cx="1206" cy="1171" rx="6" ry="4" fill="#a9cbe8"/><ellipse cx="1216" cy="1188" rx="7" ry="4" fill="#a9cbe8"/>
<text x="1231" y="1180.500" style="font-size:14px;fill:#333" textLength="29" lengthAdjust="spacingAndGlyphs">33°C</text>
<text x="1269" y="1180.500" style="font-size:14px;fill:#333" textLength="80" lengthAdjust="spacingAndGlyphs">Parc. soleado</text>
<path d="M1375 1184l6-6 6 6" fill="none" stroke="#222" stroke-width="1.300"/>
<path d="M1398 1177h3l4-4v15l-4-4h-3z" fill="none" stroke="#333"/><path d="M1408 1176c2 3 2 6 0 9M1411 1174c3 4 3 9 0 13" fill="none" stroke="#333"/>
<path d="M1426 1188a11 11 0 0 1 11-11M1429 1188a8 8 0 0 1 8-8M1432 1188a5 5 0 0 1 5-5" fill="none" stroke="#888"/><circle cx="1436" cy="1187" r="1.500" fill="#333"/>
<text x="1458" y="1180.500" class="m" style="font-size:12px;fill:#333">ESP</text>
<text x="1513" y="1171" class="m" style="font-size:12.500px;fill:#333">2:41 p. m.</text>
<text x="1513" y="1188.500" class="m" style="font-size:12.500px;fill:#333" textLength="57" lengthAdjust="spacingAndGlyphs">19/07/2025</text>
<path d="M1559.500 1172.500h15v13.500h-5l-2.500 3-2.500-3h-5z" fill="none" stroke="#222" stroke-width="1.200"/>

<!-- Watermark -->
<path d="M1361 1102l38 44-38 46-38-46zM1361 1122l-20 24 20 24 20-24z" fill="#a8c46a" fill-rule="evenodd" opacity=".13"/>
<text x="1415" y="1146" style="font-size:70px;fill:#000;opacity:.05">Platzi</text>
</svg>
</body></html>
